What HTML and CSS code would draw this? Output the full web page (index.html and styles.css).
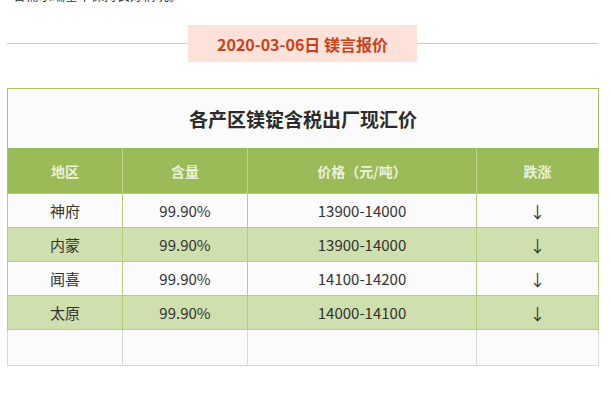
FILE: index.html
```html
<!DOCTYPE html>
<html lang="zh">
<head>
<meta charset="utf-8">
<title>镁言报价</title>
<link rel="stylesheet" href="styles.css">
</head>
<body>
<div class="page">
  <p class="intro">各需求端基本保持良好情况。</p>
  <div class="divider">
    <span class="rule"></span>
    <span class="badge">2020-03-06日 镁言报价</span>
    <span class="rule"></span>
  </div>
  <table class="price">
    <colgroup>
      <col class="c1"><col class="c2"><col class="c3"><col class="c4">
    </colgroup>
    <thead>
      <tr class="title-row"><th colspan="4">各产区镁锭含税出厂现汇价</th></tr>
      <tr class="head-row"><th>地区</th><th>含量</th><th>价格（元/吨）</th><th>跌涨</th></tr>
    </thead>
    <tbody>
      <tr class="row"><td>神府</td><td>99.90%</td><td>13900-14000</td><td class="arrow">↓</td></tr>
      <tr class="row alt"><td>内蒙</td><td>99.90%</td><td>13900-14000</td><td class="arrow">↓</td></tr>
      <tr class="row"><td>闻喜</td><td>99.90%</td><td>14100-14200</td><td class="arrow">↓</td></tr>
      <tr class="row alt"><td>太原</td><td>99.90%</td><td>14000-14100</td><td class="arrow">↓</td></tr>
      <tr class="row empty"><td></td><td></td><td></td><td></td></tr>
    </tbody>
  </table>
</div>
</body>
</html>
```

FILE: styles.css
```css
html, body {
  margin: 0;
  padding: 0;
  background: #ffffff;
}

body {
  font-family: "Noto Sans CJK SC", "Noto Sans", sans-serif;
  color: #333333;
}

.page {
  padding: 0 13px 0 7px;
  overflow: hidden;
}

.intro {
  margin: -17px 0 0 6px;
  font-size: 13px;
  line-height: 24px;
  color: #333333;
}

.divider {
  display: flex;
  align-items: center;
  margin-top: 18px;
  height: 37px;
}

.rule {
  flex: 1;
  height: 1px;
  background: #cccccc;
}

.badge {
  width: 229px;
  height: 37px;
  display: flex;
  align-items: center;
  justify-content: center;
  background: #fce2d8;
  color: #cc4119;
  font-size: 16px;
  font-weight: bold;
}

.price {
  margin-top: 26px;
  width: 591px;
  border-collapse: collapse;
  table-layout: fixed;
  font-size: 15px;
}

.c1 { width: 115px; }
.c2 { width: 125px; }
.c3 { width: 229px; }
.c4 { width: 122px; }

.title-row th {
  height: 59px;
  padding: 0;
  background: #fbfbfb;
  border: 1px solid #a4c364;
  border-bottom: none;
  font-size: 19px;
  font-weight: bold;
  color: #2b2b2b;
}

.head-row th {
  height: 45px;
  padding: 0;
  background: #9bbb59;
  color: #e9f0dc;
  font-size: 14px;
  font-weight: bold;
  border-left: 1px solid #bcd48c;
  border-right: 1px solid #bcd48c;
}

.head-row th:first-child { border-left-color: #a4c364; }
.head-row th:last-child { border-right-color: #a4c364; }

.row td {
  height: 33px;
  padding: 0;
  text-align: center;
  background: #fbfbfb;
  border: 1px solid #b4ce7f;
  font-size: 15px;
  color: #333333;
}

.row.alt td {
  background: #cfdfae;
}

.row .arrow {
  font-family: "Noto Sans CJK SC", sans-serif;
  font-size: 16px;
}

.row.empty td {
  height: 35px;
  border-color: #d9d9d9;
  border-top-color: #b4ce7f;
}
```
